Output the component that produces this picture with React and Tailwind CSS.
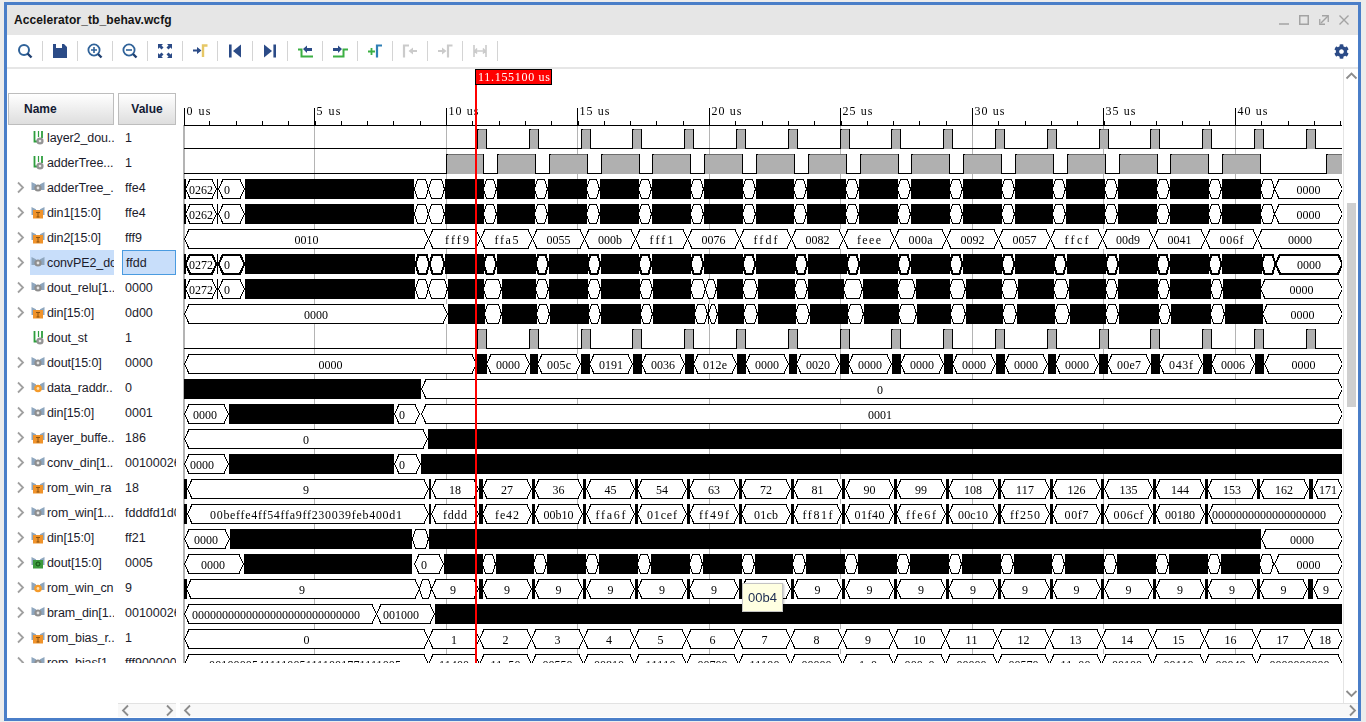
import { FaCog } from "react-icons/fa";

const STEP = 51.8;
const range = (n) => Array.from({ length: n }, (_, i) => i);

// hex segments repeated once per period
const repeat = (start, width, n) =>
  range(n).map((k) => [start + STEP * k, start + STEP * k + width]);

const addrHex = (labels, lastEnd) =>
  labels.map((t, k) => {
    const a = 482.5 + STEP * k;
    const b = k === labels.length - 1 ? lastEnd : a + 48.5;
    return [a, b, t];
  });

const din2Labels = ["ffa5", "0055", "000b", "fff1", "0076", "ffdf", "0082", "feee", "000a", "0092", "0057", "ffcf", "00d9", "0041", "006f"];
const doutLabels = ["0000", "005c", "0191", "0036", "012e", "0000", "0020", "0000", "0000", "0000", "0000", "0000", "00e7", "043f", "0006"];
const winRa = ["27", "36", "45", "54", "63", "72", "81", "90", "99", "108", "117", "126", "135", "144", "153", "162"];
const winData = ["fe42", "00b10", "ffa6f", "01cef", "ff49f", "01cb", "ff81f", "01f40", "ffe6f", "00c10", "ff250", "00f7", "006cf", "00180"];
const biasData = ["11e50", "00550", "00810", "11110", "00700", "11100", "00000", "1e0", "000e0", "00000", "00570", "11e00", "00100", "00110", "00040", "0000000000"];

const contig = (first, labels, end) =>
  labels.map((t, k) => {
    const a = first + STEP * k;
    const b = k === labels.length - 1 ? end : a + STEP;
    return [a, b, t];
  });

const rows = [
  { name: "layer2_dou..", value: "1", icon: "bit", wave: { pulse: [...repeat(477.5, 9, 17)] } },
  { name: "adderTree...", value: "1", icon: "bit", wave: { pulse: [[446, 483.5], ...repeat(497.5, 38, 15), [1326, 1342]] } },
  {
    name: "adderTree_..", value: "ffe4", icon: "gray",
    wave: {
      black: [[184, 186], [216, 218], [244, 414], [444, 1261]],
      hex: [[185, 216, "0262"], [218, 244, "0", 227], [414, 428], [428, 444], ...repeat(483, 13, 15), [1260.5, 1274], [1274, 1342, "0000"]],
    },
  },
  {
    name: "din1[15:0]", value: "ffe4", icon: "orange",
    wave: {
      black: [[184, 186], [216, 218], [244, 414], [444, 1261]],
      hex: [[185, 216, "0262"], [218, 244, "0", 227], [414, 428], [428, 444], ...repeat(483, 13, 15), [1260.5, 1274], [1274, 1342, "0000"]],
    },
  },
  {
    name: "din2[15:0]", value: "fff9", icon: "orange",
    wave: { hex: [[184, 428, "0010"], [428, 480.5, "fff9", 457], ...contig(480.5, din2Labels, 1257.5), [1257.5, 1342, "0000"]] },
  },
  {
    name: "convPE2_do", value: "ffdd", icon: "gray", selected: true,
    wave: {
      thick: true,
      black: [[184, 186], [216, 218], [244, 415], [444, 1262]],
      hex: [[185, 216, "0272"], [218, 244, "0", 227], [415, 429], [429, 444], ...repeat(483.5, 13, 15), [1261, 1275], [1275, 1342, "0000"]],
    },
  },
  {
    name: "dout_relu[1..", value: "0000", icon: "gray",
    wave: {
      black: [[184, 186], [216, 218], [244, 415], [447, 1261]],
      hex: [
        [185, 216, "0272"], [218, 244, "0", 227], [415, 428], [428, 447], [483, 501], [535.5, 548], [587, 600], [639, 652], [690, 705], [705, 716],
        [742, 757], [794.5, 807], [843.5, 862], [897.5, 915.5], [949.5, 965], [1001, 1017], [1053, 1068.5], [1105, 1117], [1157, 1169.5], [1210, 1222], [1260, 1342, "0000"],
      ],
    },
  },
  {
    name: "din[15:0]", value: "0d00", icon: "orange",
    wave: {
      black: [[447, 1263]],
      hex: [
        [184, 447, "0000"], [484, 501], [536, 549], [588, 600], [640.5, 652], [694, 707], [708, 717],
        [743, 757], [795, 809.5], [847, 863], [898.5, 916.5], [950, 965.5], [1002, 1016.5], [1054, 1069], [1105.5, 1118.5], [1158, 1170.5], [1210, 1224.5], [1262.5, 1342, "0000"],
      ],
    },
  },
  { name: "dout_st", value: "1", icon: "bit", wave: { pulse: [...repeat(477.5, 9, 17)] } },
  {
    name: "dout[15:0]", value: "0000", icon: "gray",
    wave: {
      black: [[476, 1264]],
      hex: [[184, 476, "0000"], ...doutLabels.map((t, k) => [486 + STEP * k, 529 + STEP * k, t]), [1264, 1342, "0000"]],
    },
  },
  { name: "data_raddr..", value: "0", icon: "orangeDot", wave: { black: [[184, 421]], hex: [[421, 1342, "0", 880]] } },
  {
    name: "din[15:0]", value: "0001", icon: "gray",
    wave: { black: [[228, 394]], hex: [[184, 228, "0000", 205], [394, 419, "0", 402], [421, 1342, "0001", 880]] },
  },
  { name: "layer_buffe..", value: "186", icon: "orange", wave: { black: [[427, 1342]], hex: [[184, 427, "0"]] } },
  {
    name: "conv_din[1...", value: "00100026", icon: "gray",
    wave: { black: [[228, 394], [420, 1342]], hex: [[184, 228, "0000", 202], [394, 420, "0", 402]] },
  },
  {
    name: "rom_win_ra", value: "18", icon: "orange",
    wave: {
      black: [[184, 187], [428, 431], [478, 482.5], ...repeat(531, 3.5, 15), [1308, 1313]],
      hex: [[187, 428, "9", 306], [431, 478, "18", 455], ...addrHex(winRa, 1308), [1313, 1342, "171", 1328]],
    },
  },
  {
    name: "rom_win[1...", value: "fdddfd1d00", icon: "gray",
    wave: {
      black: [[184, 187], [428, 431], [478, 482.5], ...repeat(531, 3.5, 14)],
      hex: [[187, 428, "00beffe4ff54ffa9ff230039feb400d1", 306], [431, 478, "fddd", 455], ...addrHex(winData, 1204.5), [1208, 1342, "0000000000000000000", 1269]],
    },
  },
  {
    name: "din[15:0]", value: "ff21", icon: "orange",
    wave: { black: [[229, 412], [428, 1261]], hex: [[184, 229, "0000", 206], [412, 428], [1261, 1342, "0000"]] },
  },
  {
    name: "dout[15:0]", value: "0005", icon: "green",
    wave: {
      black: [[243, 412], [443, 1260]],
      hex: [[184, 243, "0000", 213], [414, 443, "0", 424], ...repeat(482, 13, 15), [1259, 1273], [1274, 1342, "0000"]],
    },
  },
  {
    name: "rom_win_cn", value: "9", icon: "orangeDot",
    wave: {
      black: [[184, 187], [478, 482.5], ...repeat(531, 3.5, 15), [1307, 1313]],
      // the tooltip sits on the sixth value, so it has no label of its own
      hex: [[186, 419, "9", 302], [419, 431], [431, 478, "9", 453], ...addrHex(winRa.map((_, k) => (k === 5 ? "" : "9")), 1307), [1313, 1342, "9", 1326]],
    },
  },
  {
    name: "bram_din[1..", value: "00100026", icon: "gray",
    wave: { black: [[434, 1342]], hex: [[184, 376, "0000000000000000000000000000", 276], [376, 434, "001000", 401]] },
  },
  {
    name: "rom_bias_r..", value: "1", icon: "orange",
    wave: {
      hex: [
        [184, 428, "0"], [428, 479.5, "1"],
        ...contig(479.5, ["2", "3", "4", "5", "6", "7", "8", "9", "10", "11", "12", "13", "14", "15", "16", "17"], 1308),
        [1308, 1342, "18", 1325],
      ],
    },
  },
  {
    name: "rom_bias[1...", value: "fff90000000", icon: "gray",
    wave: { hex: [[184, 428, "00100005411110051111001771111005", 305], [428, 479.5, "11400"], ...contig(479.5, biasData, 1342)] },
  },
];

const snap = (x) => Math.floor(x) + 0.5;

function HexSeg({ seg, top, thick }) {
  const [a0, b0, label, center] = seg;
  const a = snap(a0);
  const b = snap(b0);
  const inset = b - a < 20 ? 3 : 4.5;
  const y1 = top + 0.5;
  const y2 = top + 19.5;
  const mid = top + 10;
  const pts = `${a},${mid} ${a + inset},${y1} ${b - inset},${y1} ${b},${mid} ${b - inset},${y2} ${a + inset},${y2}`;
  return (
    <>
      <rect x={a} y={top} width={b - a} height={20} fill="#fff" shapeRendering="crispEdges" />
      <polygon points={pts} fill="#fff" stroke="#000" strokeWidth={thick ? 2 : 1} shapeRendering="crispEdges" />
      {label && (
        <text
          x={center ?? (a + b) / 2}
          y={top + 15}
          textAnchor="middle"
          textLength={label.length * 6}
          lengthAdjust="spacing"
          className="fill-black text-[12px] [font-family:'Liberation_Serif',serif]"
        >
          {label}
        </text>
      )}
    </>
  );
}

function Pulses({ pulses, top }) {
  const low = top + 19.5;
  const high = top + 0.5;
  let d = "M184 " + low;
  pulses.forEach(([a, b]) => {
    d += ` H${snap(a)} V${high} H${snap(b)} V${low}`;
  });
  d += " H1342";
  return (
    <>
      {pulses.map(([a, b], i) => (
        <rect key={i} x={snap(a)} y={high} width={snap(b) - snap(a)} height={19} fill="#b0b0b0" shapeRendering="crispEdges" />
      ))}
      <path d={d} fill="none" stroke="#000" shapeRendering="crispEdges" />
      {pulses.map(([a, b], i) => (
        <line key={i} x1={snap(a) + 1} x2={snap(b) - 1} y1={high} y2={high} stroke="#6e6e6e" shapeRendering="crispEdges" />
      ))}
    </>
  );
}

function Waveforms() {
  const majors = range(9).map((i) => (i === 0 ? 184 : 183.5 + i * 131.45));
  const minors = range(45).map((i) => 183.5 + i * 26.3);
  return (
    <svg width="1158" height="594" viewBox="184 69 1158 594" className="block [will-change:transform]">
      {/* ruler */}
      <line x1="184" x2="1342" y1="125.5" y2="125.5" stroke="#000" shapeRendering="crispEdges" />
      {minors.map((x, i) => (
        <line key={i} x1={snap(x)} x2={snap(x)} y1="121" y2="125" stroke="#000" shapeRendering="crispEdges" />
      ))}
      {majors.map((x, i) => (
        <g key={i}>
          <line x1={snap(x)} x2={snap(x)} y1="108" y2="125" stroke="#000" shapeRendering="crispEdges" />
          <line x1={snap(x)} x2={snap(x)} y1="126" y2="663" stroke="#b4b4b4" shapeRendering="crispEdges" />
          <text
            x={snap(x) + 2}
            y="115"
            textLength={(i * 5 >= 10 ? 5 : 4) * 6}
            lengthAdjust="spacing"
            className="fill-black text-[12px] [font-family:'Liberation_Serif',serif]"
          >
            {i * 5} us
          </text>
        </g>
      ))}

      {rows.map((row, i) => {
        const top = 129 + i * 25;
        const { pulse, black = [], hex = [], thick } = row.wave;
        return (
          <g key={i}>
            {pulse && <Pulses pulses={pulse} top={top} />}
            {black.map(([a, b], j) => (
              <rect key={j} x={a} y={top} width={b - a} height={20} fill="#000" shapeRendering="crispEdges" />
            ))}
            {hex.map((seg, j) => (
              <HexSeg key={j} seg={seg} top={top} thick={thick} />
            ))}
          </g>
        );
      })}

      {/* cursor */}
      <rect x="475" y="85" width="2" height="578" fill="#ff0000" shapeRendering="crispEdges" />
      <rect x="475.5" y="69.5" width="76" height="15" fill="#ff0000" stroke="#000" shapeRendering="crispEdges" />
      <text
        x="478"
        y="81"
        textLength="72"
        lengthAdjust="spacing"
        className="fill-white text-[12px] [font-family:'Liberation_Serif',serif]"
      >
        11.155100 us
      </text>
    </svg>
  );
}

function SignalIcon({ type }) {
  if (type === "bit") {
    return (
      <svg width="14" height="16" viewBox="0 0 14 16" className="ml-[1px]">
        <path d="M2.5 1v10.5H6.5M10 8V1" fill="none" stroke="#2e9e3e" strokeWidth="1.8" />
        <path d="M6.5 1v6" fill="none" stroke="#2e9e3e" strokeWidth="1.2" />
        <circle cx="8" cy="11" r="3.6" fill="#949494" />
        <circle cx="8" cy="11" r="1.3" fill="#e8e8e8" />
      </svg>
    );
  }
  const wings = "M0.5 1L5 3.2V9L0.5 9zM13.5 1L9 3.2V9L13.5 9z";
  return (
    <svg width="14" height="14" viewBox="0 0 14 14">
      <path d={wings} fill="#8ea6be" />
      {type === "gray" && (
        <>
          <circle cx="7" cy="7" r="3.6" fill="#8e8e8e" />
          <circle cx="7" cy="7" r="1.4" fill="#e4e4e4" />
        </>
      )}
      {type === "orange" && (
        <>
          <rect x="2" y="4" width="10" height="8.5" fill="#f0932b" />
          <path d="M5 6.5h4M7 6.5v4.5M5.5 11h3" stroke="#8a5310" strokeWidth="1" fill="none" />
        </>
      )}
      {type === "green" && (
        <>
          <rect x="2" y="4" width="10" height="8.5" fill="#3d9a3d" />
          <circle cx="7" cy="8" r="2" fill="none" stroke="#124d12" strokeWidth="1" />
        </>
      )}
      {type === "orangeDot" && (
        <>
          <circle cx="7" cy="7.5" r="3.8" fill="#f49b2c" />
          <circle cx="7" cy="7.5" r="1.4" fill="#fde1b5" />
        </>
      )}
    </svg>
  );
}

function Chevron({ dir = "right" }) {
  const d = {
    right: "M2 1.5L7 6.5L2 11.5",
    left: "M7 1.5L2 6.5L7 11.5",
    up: "M1.5 7.5L6.5 2.5L11.5 7.5",
    down: "M1.5 3L6.5 8L11.5 3",
  }[dir];
  const w = dir === "left" || dir === "right" ? 9 : 13;
  return (
    <svg width={w} height="13" viewBox={`0 0 ${w} 13`}>
      <path d={d} fill="none" stroke="currentColor" strokeWidth="1.8" />
    </svg>
  );
}

const NAVY = "#2b4b87";
const GREY = "#cbcbcb";

function ToolIcon({ name }) {
  const icons = {
    search: (
      <>
        <circle cx="9" cy="9" r="5" fill="none" stroke="#2f6299" strokeWidth="2" />
        <path d="M12.5 12.5L16.5 16.5" stroke="#1f3f70" strokeWidth="2.4" />
      </>
    ),
    save: (
      <path d="M3 3h11l3 3v11H3zM6 3v4h6V3z" fill={NAVY} fillRule="evenodd" />
    ),
    zoomIn: (
      <>
        <circle cx="9" cy="9" r="5.6" fill="none" stroke="#2f6299" strokeWidth="1.8" />
        <path d="M6 9h6M9 6v6" stroke="#2f6299" strokeWidth="1.6" />
        <path d="M13 13L16.5 16.5" stroke="#1f3f70" strokeWidth="2.4" />
      </>
    ),
    zoomOut: (
      <>
        <circle cx="9" cy="9" r="5.6" fill="none" stroke="#2f6299" strokeWidth="1.8" />
        <path d="M6 9h6" stroke="#2f6299" strokeWidth="1.6" />
        <path d="M13 13L16.5 16.5" stroke="#1f3f70" strokeWidth="2.4" />
      </>
    ),
    fit: (
      <path
        d="M3 3h5L6.5 4.5 8.5 6.5 6.5 8.5 4.5 6.5 3 8zM17 3v5L15.5 6.5 13.5 8.5 11.5 6.5 13.5 4.5 12 3zM3 17v-5l1.5 1.5 2-2 2 2-2 2L8 17zM17 17h-5l1.5-1.5-2-2 2-2 2 2L17 12z"
        fill={NAVY}
      />
    ),
    gotoCursor: (
      <>
        <path d="M3 8.5h4V6l4.5 3.5L7 13v-2.5H3z" fill={NAVY} />
        <path d="M13 16V4.5h4.5" fill="none" stroke="#e6c766" strokeWidth="2.4" />
      </>
    ),
    first: (
      <>
        <rect x="4" y="3.5" width="2.6" height="13" fill={NAVY} />
        <path d="M16 3.5L8 10l8 6.5z" fill={NAVY} />
      </>
    ),
    last: (
      <>
        <path d="M4 3.5L12 10l-8 6.5z" fill={NAVY} />
        <rect x="13.4" y="3.5" width="2.6" height="13" fill={NAVY} />
      </>
    ),
    prevEdge: (
      <>
        <path d="M3 8.5h3.5v7H18" fill="none" stroke="#3cb043" strokeWidth="2" />
        <path d="M8 8l4-3.5V7h5v3h-5v2z" fill={NAVY} />
      </>
    ),
    nextEdge: (
      <>
        <path d="M3 15.5h10.5v-7H18" fill="none" stroke="#3cb043" strokeWidth="2" />
        <path d="M12 8L8 4.5V7H3v3h5v2z" fill={NAVY} />
      </>
    ),
    addMarker: (
      <>
        <path d="M3 10.5h7M6.5 7v7" stroke="#3cb043" strokeWidth="1.8" />
        <path d="M12 16.5V4.5h5" fill="none" stroke="#2f7fb5" strokeWidth="2.2" />
      </>
    ),
    prevMarker: (
      <>
        <path d="M4 16.5V4.5h5" fill="none" stroke={GREY} strokeWidth="2.2" />
        <path d="M17 9h-4V6.5L8.5 10l4.5 3.5V11h4z" fill={GREY} />
      </>
    ),
    nextMarker: (
      <>
        <path d="M3 9h4V6.5l4.5 3.5L7 13.5V11H3z" fill={GREY} />
        <path d="M13 16.5V4.5h4.5" fill="none" stroke={GREY} strokeWidth="2.2" />
      </>
    ),
    swap: (
      <path d="M4 4v12M16 4v12M5 10h10M7 7.5L5 10l2 2.5M13 7.5l2 2.5-2 2.5" fill="none" stroke={GREY} strokeWidth="1.6" />
    ),
  };
  return (
    <svg width="20" height="20" viewBox="0 0 20 20">
      {icons[name]}
    </svg>
  );
}

const tools = ["search", "save", "zoomIn", "zoomOut", "fit", "gotoCursor", "first", "last", "prevEdge", "nextEdge", "addMarker", "prevMarker", "nextMarker", "swap"];

function WindowButtons() {
  return (
    <div className="flex items-center gap-[10px] mr-[9px] text-[#a3a3a3]">
      <svg width="10" height="10" viewBox="0 0 10 10">
        <path d="M0 9h10" stroke="currentColor" strokeWidth="1.5" />
      </svg>
      <svg width="10" height="10" viewBox="0 0 10 10">
        <rect x="0.75" y="0.75" width="8.5" height="8.5" fill="none" stroke="currentColor" strokeWidth="1.5" />
      </svg>
      <svg width="10" height="10" viewBox="0 0 10 10">
        <path d="M3 .75h6.25V7M.75 4v5.25H6" fill="none" stroke="currentColor" strokeWidth="1.3" />
        <path d="M9 1L2 8" stroke="currentColor" strokeWidth="1.4" />
      </svg>
      <svg width="10" height="10" viewBox="0 0 10 10">
        <path d="M.5.5l9 9M9.5.5l-9 9" stroke="currentColor" strokeWidth="1.4" />
      </svg>
    </div>
  );
}

export default function App() {
  return (
    <div className="w-[1366px] h-[722px] bg-[#ececec] pt-[2px] pl-[4px] [font-family:'Liberation_Sans',Arial,sans-serif] overflow-hidden">
      <div className="w-[1357px] h-[719px] border-[3px] border-[#4a7ec8] bg-white flex flex-col">
        {/* title bar */}
        <div className="h-[30px] bg-[#e6e6e6] flex items-center justify-between pl-[7px] shrink-0">
          <span className="text-[12px] font-bold text-[#141414] tracking-[0.1px]">Accelerator_tb_behav.wcfg</span>
          <WindowButtons />
        </div>

        {/* toolbar */}
        <div className="h-[34px] shrink-0 border-b-2 border-[#e6e6e6] flex items-center justify-between pl-[1px] pr-[9px]">
          <div className="flex items-center">
            {tools.map((t) => (
              <div key={t} className="flex items-center">
                <div className="w-[34px] flex justify-center">
                  <ToolIcon name={t} />
                </div>
                <span className="w-px h-[20px] bg-[#d4d4d4]" />
              </div>
            ))}
          </div>
          <FaCog size={15} color="#2b4b87" />
        </div>

        {/* main */}
        <div className="flex h-[634px] shrink-0">
          <div className="w-[177px] shrink-0 flex flex-col">
            <div className="h-[24px] shrink-0" />
            <div className="h-[32px] shrink-0 flex pl-[1px] text-[12px] font-bold text-[#141a33]">
              <div className="w-[106px] border border-[#bdbdbd] bg-gradient-to-b from-white to-[#dedede] flex items-center pl-[15px]">Name</div>
              <div className="w-[58px] ml-[4px] border border-[#bdbdbd] bg-gradient-to-b from-white to-[#dedede] flex items-center justify-center">Value</div>
            </div>
            <div className="h-[538px] shrink-0 overflow-hidden border-r border-[#b4b4b4]">
              {rows.map((row, i) => (
                <div key={i} className="h-[25px] flex items-center text-[12.5px] text-[#1b1b2b]">
                  <div className="w-[23px] shrink-0 pl-[9px] text-[#a0a0a0]">
                    {row.icon !== "bit" && <Chevron />}
                  </div>
                  <div className={`w-[84px] shrink-0 h-full flex items-center overflow-hidden ${row.selected ? "bg-[#c8defa]" : ""}`}>
                    <div className="w-[17px] shrink-0 pl-[1px] flex">
                      <SignalIcon type={row.icon} />
                    </div>
                    <span className="whitespace-nowrap pt-[1px] tracking-[-0.1px]">{row.name}</span>
                  </div>
                  <div
                    className={`w-[54px] ml-[8px] shrink-0 h-full flex items-center overflow-hidden whitespace-nowrap pt-[1px] pl-[3px] ${row.selected ? "bg-[#c8defa] border border-[#4a9be0] pl-[2px]" : ""}`}
                  >
                    {row.value}
                  </div>
                </div>
              ))}
            </div>
          </div>

          <div className="relative w-[1160px] shrink-0 border-r border-[#e4e4e4]">
            <Waveforms />
            <div className="absolute left-[558px] top-[514px] w-[41px] h-[29px] bg-[#ffffe1] border border-[#c4c4c4] shadow-[1px_1px_2px_rgba(0,0,0,0.25)] flex items-center justify-center text-[13px] text-[#1c2c50]">
              00b4
            </div>
          </div>

          <div className="relative w-[14px] shrink-0 flex flex-col items-center justify-between py-[2px] text-[#8c8c8c]">
            <Chevron dir="up" />
            <Chevron dir="down" />
            <div className="absolute left-[3px] top-[134px] w-[9px] h-[204px] bg-[#cfcfcf]" />
          </div>
        </div>

        {/* bottom scrollbars */}
        <div className="h-[14px] shrink-0 flex">
          <div className="w-[111px] shrink-0" />
          <div className="w-[58px] shrink-0 bg-[#f8f8f8] border-t border-[#e2e2e2] flex items-center justify-between pl-[3px] pr-[2px] text-[#8c8c8c]">
            <Chevron dir="left" />
            <Chevron dir="right" />
          </div>
          <div className="w-[4px] shrink-0" />
          <div className="flex-1 bg-[#f8f8f8] border-t border-[#e2e2e2] flex items-center justify-between pl-[3px] pr-[1px] text-[#8c8c8c]">
            <Chevron dir="left" />
            <Chevron dir="right" />
          </div>
        </div>
      </div>
    </div>
  );
}
